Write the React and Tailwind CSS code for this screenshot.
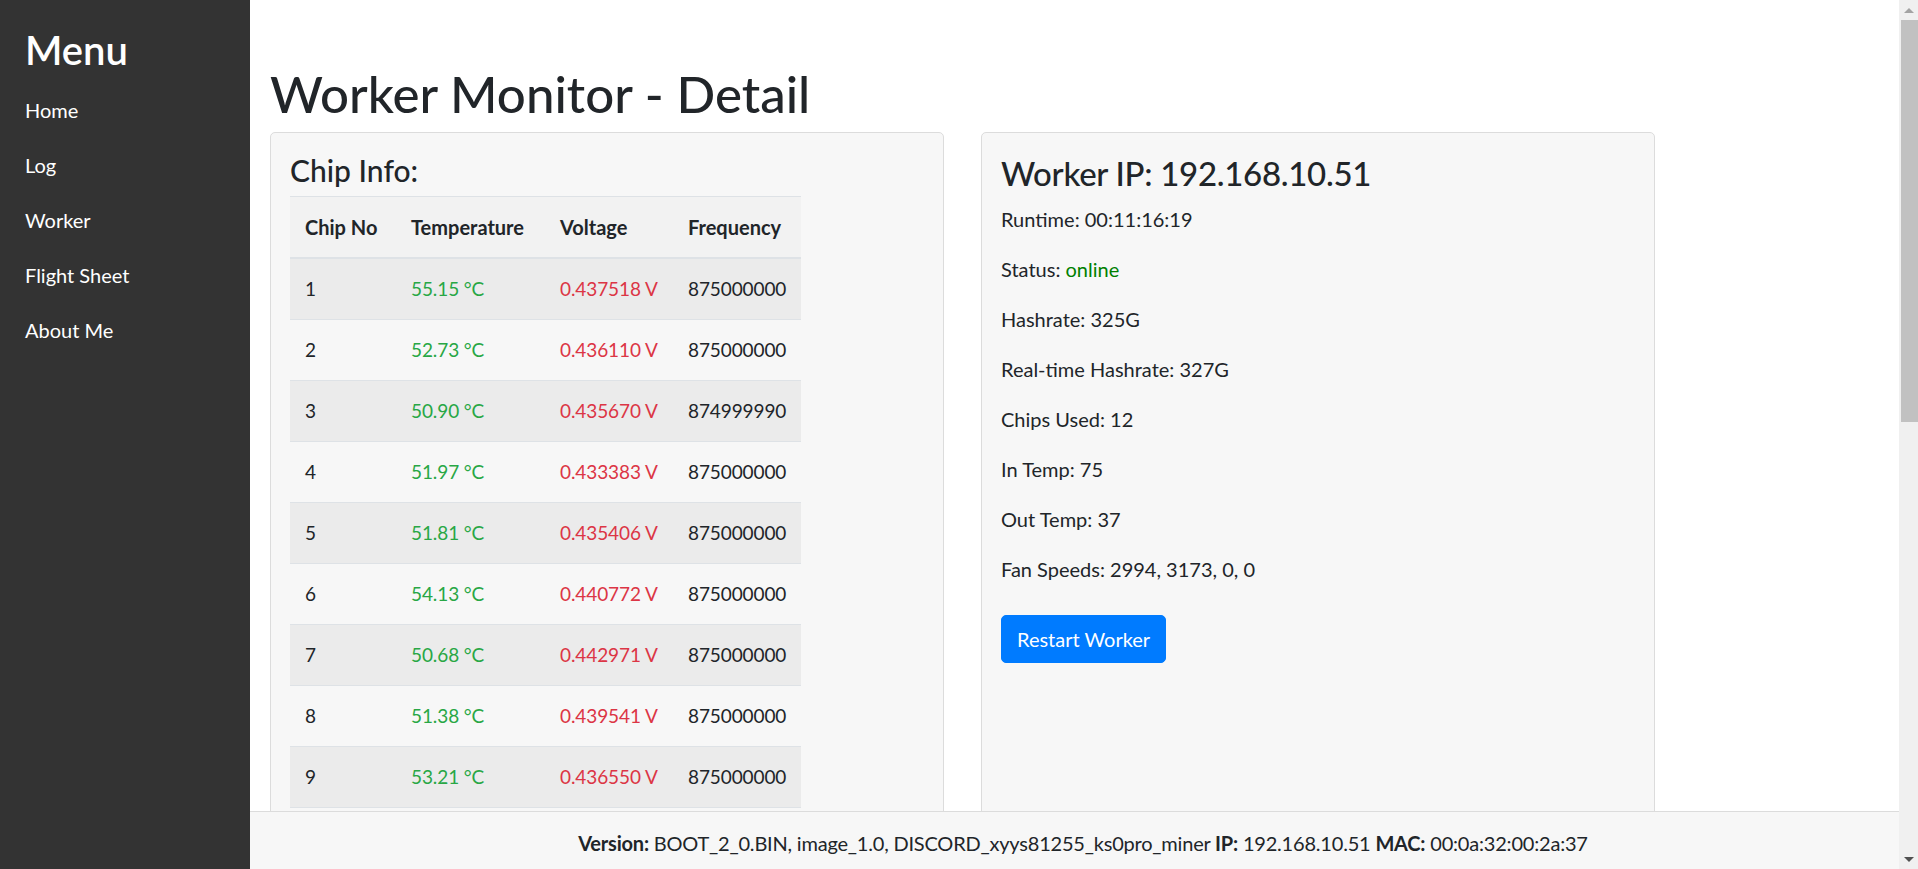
import React from 'react';

const chips = [
  ['1', '55.15', '0.437518', '875000000'],
  ['2', '52.73', '0.436110', '875000000'],
  ['3', '50.90', '0.435670', '874999990'],
  ['4', '51.97', '0.433383', '875000000'],
  ['5', '51.81', '0.435406', '875000000'],
  ['6', '54.13', '0.440772', '875000000'],
  ['7', '50.68', '0.442971', '875000000'],
  ['8', '51.38', '0.439541', '875000000'],
  ['9', '53.21', '0.436550', '875000000'],
];

const menu = ['Home', 'Log', 'Worker', 'Flight Sheet', 'About Me'];

function Sidebar() {
  return (
    <div className="w-[250px] shrink-0 h-full bg-[#333333] text-white pl-[25px] pt-[26px]">
      <h2 className="text-[40px] leading-[48px] font-semibold mb-[8px]">Menu</h2>
      <ul>
        {menu.map((m) => (
          <li key={m} className="h-[55px] flex items-center text-[20px] leading-[30px]">
            <a href="#">{m}</a>
          </li>
        ))}
      </ul>
    </div>
  );
}

function ChipTable() {
  const th = 'text-left font-bold px-[15px] py-[15px] border-t border-[#dee2e6] border-b-2 border-b-[#dee2e6] whitespace-nowrap text-[20px]';
  const td = 'px-[15px] py-[15px] border-t border-b border-[#dee2e6] whitespace-nowrap text-[19px] tracking-[-0.1px]';
  return (
    <div className="w-[674px] shrink-0 min-h-[760px] bg-[#f7f7f7] border border-[#dcdcdc] rounded-[5px] p-[19px]">
      <h4 className="text-[30px] leading-[36px] font-medium mb-[8px]">Chip Info:</h4>
      <table className="border-collapse leading-[30px]">
        <thead>
          <tr className="bg-[#f2f2f2]">
            <th className={`w-[106px] ${th}`}>Chip No</th>
            <th className={`w-[149px] ${th}`}>Temperature</th>
            <th className={`w-[128px] ${th}`}>Voltage</th>
            <th className={`w-[127px] ${th}`}>Frequency</th>
          </tr>
        </thead>
        <tbody>
          {chips.map((c, i) => (
            <tr key={c[0]} className={i % 2 === 0 ? 'bg-[#ebebeb]' : 'bg-[#f7f7f7]'}>
              <td className={td}>{c[0]}</td>
              <td className={`${td} text-[#28a745]`}>{c[1]} °C</td>
              <td className={`${td} text-[#dc3545]`}>{c[2]} V</td>
              <td className={td}>{c[3]}</td>
            </tr>
          ))}
        </tbody>
      </table>
    </div>
  );
}

function WorkerInfo() {
  const rows = [
    ['Runtime', '00:11:16:19'],
    ['Status', null],
    ['Hashrate', '325G'],
    ['Real-time Hashrate', '327G'],
    ['Chips Used', '12'],
    ['In Temp', '75'],
    ['Out Temp', '37'],
    ['Fan Speeds', '2994, 3173, 0, 0'],
  ];
  return (
    <div className="w-[674px] shrink-0 min-h-[760px] bg-[#f7f7f7] border border-[#dcdcdc] rounded-[5px] p-[19px]">
      <h3 className="text-[33px] leading-[42px] font-medium mb-[10px] tracking-[-0.3px]">Worker IP: 192.168.10.51</h3>
      {rows.map(([k, v]) => (
        <p key={k} className="text-[20px] leading-[30px] mb-[20px]">
          {k}: {v === null ? <span className="text-[#008000]">online</span> : v}
        </p>
      ))}
      <button className="mt-[11px] bg-[#007bff] text-white text-[20px] leading-[30px] px-[15px] py-[8px] rounded-[5px] border border-[#007bff]">
        Restart Worker
      </button>
    </div>
  );
}

function Scrollbar() {
  return (
    <div className="w-[19px] shrink-0 h-full bg-[#f0f0f0] flex flex-col">
      <div className="h-[20px] flex items-center justify-center">
        <div className="w-0 h-0 border-l-[5px] border-r-[5px] border-b-[5px] border-l-transparent border-r-transparent border-b-[#a3a3a3]" />
      </div>
      <div className="ml-[2px] h-[402px] bg-[#c1c1c1]" />
      <div className="flex-1" />
      <div className="h-[20px] flex items-center justify-center">
        <div className="w-0 h-0 border-l-[5px] border-r-[5px] border-t-[5px] border-l-transparent border-r-transparent border-t-[#505050]" />
      </div>
    </div>
  );
}

export default function App() {
  return (
    <div className="flex h-screen w-full overflow-hidden bg-white text-[#212529] font-['Lato','Open_Sans',sans-serif]">
      <Sidebar />
      <div className="flex-1 flex flex-col min-w-0">
        <div className="flex-1 overflow-hidden pl-[20px] pt-[64px]">
          <h1 className="text-[51px] leading-[60px] font-medium mb-[8px]">Worker Monitor - Detail</h1>
          <div className="flex gap-[37px] items-start">
            <ChipTable />
            <WorkerInfo />
          </div>
        </div>
        <div className="h-[58px] shrink-0 bg-[#f7f7f7] border-t border-[#dcdcdc] pt-[16px] pl-[17px] text-center text-[20px] leading-[30px] tracking-[-0.2px]">
          <b>Version:</b> BOOT_2_0.BIN, image_1.0, DISCORD_xyys81255_ks0pro_miner <b>IP:</b> 192.168.10.51 <b>MAC:</b> 00:0a:32:00:2a:37
        </div>
      </div>
      <Scrollbar />
    </div>
  );
}
